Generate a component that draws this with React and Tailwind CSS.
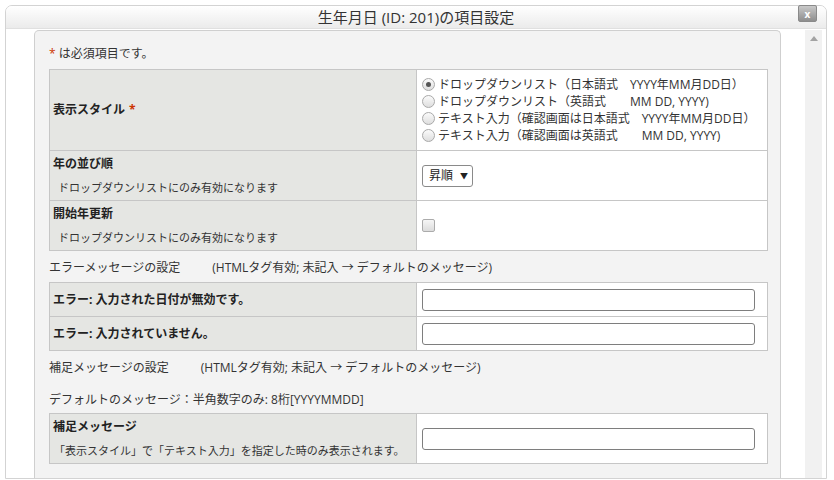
const font = { fontFamily: '"Open Sans", "Noto Sans CJK JP", sans-serif' };

const Radio = ({ checked, children }) => (
  <label className="flex items-center h-[17px]">
    <span className="w-[13px] h-[13px] mr-[3px] rounded-full border border-[#a9a9a9] bg-gradient-to-b from-[#fbfbfb] to-[#dedede] flex items-center justify-center">
      {checked && <span className="w-[5px] h-[5px] rounded-full bg-[#555]" />}
    </span>
    <span className="whitespace-pre">{children}</span>
  </label>
);

const TextBox = () => (
  <div className="w-[333px] h-[22px] border border-[#7e7e7e] rounded-[3px] bg-white" />
);

const LabelCell = ({ title, note, required, noteIndent = true }) => (
  <div className="w-[367px] shrink-0 bg-[#e5e6e3] border-r border-[#c6c6c6] pl-[3px] flex flex-col justify-center gap-[6px]">
    <div className="h-[18px] leading-[18px] text-[12px] font-bold text-[#222]">
      {title}
      {required && <span className="text-[#cc3300] ml-[4px]">*</span>}
    </div>
    {note && (
      <div className={`h-[18px] leading-[18px] text-[11px] text-[#333] ${noteIndent ? "pl-[5px]" : "pl-[1px]"}`}>
        {note}
      </div>
    )}
  </div>
);

export default function App() {
  return (
    <div className="w-[834px] h-[480px] bg-white pt-[5px] pl-[5px] pr-[7px] overflow-hidden text-[#333]" style={font}>
      <div className="h-[474px] border border-[#d3d3d3] rounded-t-[7px] flex flex-col">
        {/* Title bar */}
        <div className="relative h-[23px] shrink-0 rounded-t-[6px] bg-gradient-to-b from-white to-[#ebebeb] border-b border-[#e0e0e0] flex items-center justify-center">
          <span className="text-[15px] text-[#333] leading-none">生年月日 (ID: 201)の項目設定</span>
          <div className="absolute top-[-1px] right-[9px] w-[19px] h-[17px] border border-[#8a8a8a] rounded-[2px] bg-gradient-to-b from-[#c9c9c9] to-[#8e8e8e] flex items-center justify-center">
            <span className="text-white text-[10px] font-bold leading-none">x</span>
          </div>
        </div>

        {/* Body */}
        <div className="flex-1 flex min-h-0 overflow-hidden">
          <div className="pl-[28px] pt-[1px] flex">
            <div className="w-[747px] bg-[#f3f3f3] border border-b-0 border-[#cfcfcf] rounded-t-[5px] pl-[14px] text-[12px]">
              <div className="mt-[14px] h-[18px] leading-[18px]">
                <span className="text-[#cc3300]">*</span> は必須項目です。
              </div>

              {/* Display style table */}
              <div className="mt-[6px] w-[719px] border border-[#c6c6c6] bg-white">
                <div className="flex h-[80px]">
                  <LabelCell title="表示スタイル" required />
                  <div className="flex-1 pl-[5px] flex flex-col justify-center">
                    <Radio checked>{"ドロップダウンリスト（日本語式　YYYY年MM月DD日）"}</Radio>
                    <Radio>{"ドロップダウンリスト（英語式　　MM DD, YYYY)"}</Radio>
                    <Radio>{"テキスト入力（確認画面は日本語式　YYYY年MM月DD日）"}</Radio>
                    <Radio>{"テキスト入力（確認画面は英語式　　MM DD, YYYY)"}</Radio>
                  </div>
                </div>
                <div className="flex h-[50px] border-t border-[#c6c6c6]">
                  <LabelCell title="年の並び順" note="ドロップダウンリストにのみ有効になります" />
                  <div className="flex-1 pl-[5px] flex items-center">
                    <div className="w-[51px] h-[22px] border border-[#8a8a8a] rounded-[3px] bg-white flex items-center pl-[6px] pr-[4px] justify-between">
                      <span className="text-[12px] text-[#222]">昇順</span>
                      <span className="text-[8px] text-[#222]">▼</span>
                    </div>
                  </div>
                </div>
                <div className="flex h-[50px] border-t border-[#c6c6c6]">
                  <LabelCell title="開始年更新" note="ドロップダウンリストにのみ有効になります" />
                  <div className="flex-1 pl-[5px] flex items-center">
                    <span className="w-[13px] h-[13px] rounded-[2px] border border-[#ababab] bg-gradient-to-b from-[#f6f6f6] to-[#dcdcdc]" />
                  </div>
                </div>
              </div>

              <div className="mt-[8px] h-[18px] leading-[18px]">
                エラーメッセージの設定
                <span className="ml-[32px]">(HTMLタグ有効; 未記入 → デフォルトのメッセージ)</span>
              </div>

              {/* Error messages */}
              <div className="mt-[5px] w-[719px] border border-[#c6c6c6] bg-white">
                <div className="flex h-[33px]">
                  <LabelCell title="エラー: 入力された日付が無効です。" />
                  <div className="flex-1 pl-[5px] flex items-center">
                    <TextBox />
                  </div>
                </div>
                <div className="flex h-[34px] border-t border-[#c6c6c6]">
                  <LabelCell title="エラー: 入力されていません。" />
                  <div className="flex-1 pl-[5px] flex items-center">
                    <TextBox />
                  </div>
                </div>
              </div>

              <div className="mt-[8px] h-[18px] leading-[18px]">
                補足メッセージの設定
                <span className="ml-[32px]">(HTMLタグ有効; 未記入 → デフォルトのメッセージ)</span>
              </div>
              <div className="mt-[14px] h-[18px] leading-[18px]">
                デフォルトのメッセージ：半角数字のみ: 8桁[YYYYMMDD]
              </div>

              {/* Supplement message */}
              <div className="mt-[4px] w-[719px] border border-[#c6c6c6] bg-white">
                <div className="flex h-[49px]">
                  <LabelCell
                    title="補足メッセージ"
                    note="「表示スタイル」で「テキスト入力」を指定した時のみ表示されます。"
                    noteIndent={false}
                  />
                  <div className="flex-1 pl-[5px] flex items-center">
                    <TextBox />
                  </div>
                </div>
              </div>
            </div>
          </div>

          {/* Scrollbar */}
          <div className="ml-[24px] mt-[1px] w-[17px] bg-[#f1f1f1] flex justify-center pt-[6px]">
            <svg width="8" height="5" viewBox="0 0 8 5">
              <path d="M0 5 L4 0 L8 5 Z" fill="#a3a3a3" />
            </svg>
          </div>
        </div>
      </div>
    </div>
  );
}
